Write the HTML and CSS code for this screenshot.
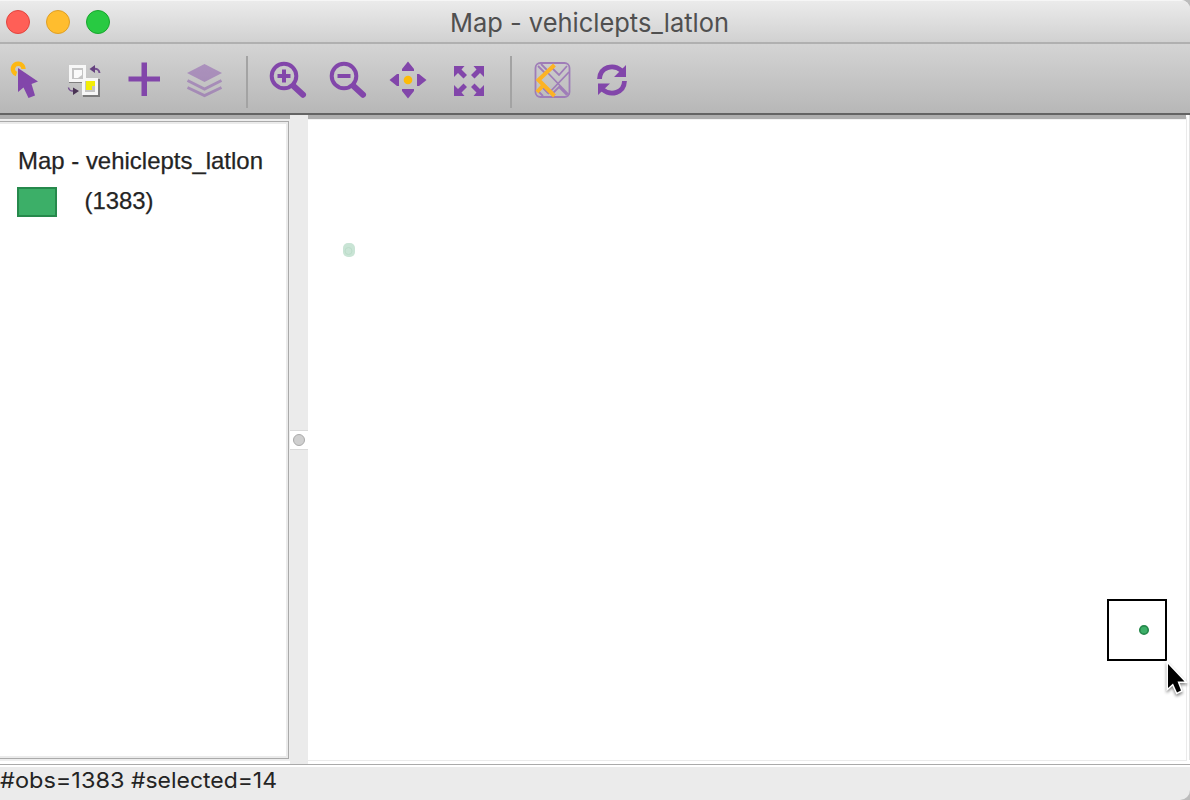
FILE: index.html
```html
<!DOCTYPE html>
<html lang="en">
<head>
<meta charset="utf-8">
<title>Map - vehiclepts_latlon</title>
<link rel="stylesheet" href="styles.css">
</head>
<body>
<div class="window">
  <header class="titlebar">
    <div class="lights"><span class="light close"></span><span class="light minimize"></span><span class="light expand"></span></div>
    <svg class="title" width="290" height="42"><text x="5" y="31.500" textLength="279" lengthAdjust="spacingAndGlyphs">Map - vehiclepts_latlon</text></svg>
  </header>
  <nav class="toolbar">
    <svg class="tool" viewBox="0 55 50 50"><path class="gold-line" stroke-width="4.500" d="M16.500 74A5.300 5.300 0 1 1 23.500 69"/><path class="fill" d="M18 68V92L23.500 87.500L28.500 98L35 95.500L31.500 84L38 81.500Z"/></svg>
    <svg class="tool" viewBox="60 55 50 50"><g transform="translate(1 1)" opacity=".35"><path d="M68 64H85V82H68ZM82 78H99V96H82Z"/></g><path fill="#f7f7f7" d="M69 65H86V82H69ZM82 78H98V95H82Z"/><path fill="#c4c4c4" d="M72 68H83V79H72ZM85 81H95V92H85Z"/><path fill="#fafafa" d="M74 70H82V75L78 78H74Z"/><path fill="#f3ed08" d="M86 81H95V86H92V90H86Z"/><path fill="none" stroke="#75508f" stroke-width="2" d="M93 69Q99 68 99.500 73"/><path fill="#65417f" d="M89.500 69L95 65V73Z"/><path fill="none" stroke="#75508f" stroke-width="1.500" d="M68.500 87.500Q69 91 73 91"/><path fill="#493354" d="M79 91L73 87.500V95Z"/></svg>
    <svg class="tool" viewBox="120 55 50 50"><path class="fill" d="M141.500 62.500H147V76.500H160V81.500H147V96H141.500V81.500H128.500V76.500H141.500Z"/></svg>
    <svg class="tool faded" viewBox="180 55 50 50"><path class="fill" d="M204.500 64L222 73L204.500 82L187 73Z"/><path class="line" stroke-width="3" d="M187.500 80.500L204.500 89L221.500 80.500M187.500 87.500L204.500 95.500L221.500 87.500"/></svg>
    <span class="divider"></span>
    <svg class="tool" viewBox="263 55 50 50"><circle class="line" cx="284" cy="76" r="12.300" stroke-width="4"/><path class="line" stroke-width="4" d="M277.500 76H290.500M284 69.500V82.500"/><path class="line round" stroke-width="6" d="M293.500 86L303 94.800"/></svg>
    <svg class="tool" viewBox="323 55 50 50"><circle class="line" cx="344" cy="76" r="12.300" stroke-width="4"/><path class="line" stroke-width="4" d="M337.500 76H350.500"/><path class="line round" stroke-width="6" d="M353.500 86L363 94.800"/></svg>
    <svg class="tool" viewBox="383 55 50 50"><path class="fill" d="M408 61.500L414 69V71H402V69ZM408 98.500L414 91V89H402V91ZM389.500 80L397 74H399V86H397ZM426.500 80L419 74H417V86H419Z"/><circle cx="408" cy="80" r="4.300" fill="#fdbb08"/></svg>
    <svg class="tool" viewBox="443 55 50 50"><path class="fill" d="M454 66H464.500L461.500 69.500L467 75L463.500 78.500L458 73L454 77ZM484 66H473.500L476.500 69.500L471 75L474.500 78.500L480 73L484 77ZM454 96H464.500L461.500 92.500L467 87L463.500 83.500L458 89L454 85ZM484 96H473.500L476.500 92.500L471 87L474.500 83.500L480 89L484 85Z"/></svg>
    <span class="divider second"></span>
    <svg class="tool" viewBox="527 55 50 50"><g fill="none" stroke="#9f7db8" stroke-width="1.800"><rect x="535.500" y="63" width="34" height="34" rx="5"/><path d="M538 66L545 73M547 72L569 95M569 72L548 94M551 67L559 75L567 66M553 93L559 87L567 95M537 90L543 96M541 64L547 70M541 86L548 93"/></g><path fill="none" stroke="#fdb324" stroke-width="4" d="M554.500 65L538.500 80L554.500 96M537 92L544 84.500"/></svg>
    <svg class="tool" viewBox="587 55 50 50"><path class="line" stroke-width="4.800" d="M599.500 79C600 67 613 63.500 621.500 70.500M624.500 81C624 93 611 96.500 602.500 89.500"/><path class="fill" d="M626 65V77H614ZM598 95V83.500H610Z"/></svg>
  </nav>
  <main class="workspace">
    <aside class="legend">
      <div class="legend-box">
        <svg width="285" height="120"><g class="legend-text"><text x="18" y="47" textLength="245" lengthAdjust="spacingAndGlyphs">Map - vehiclepts_latlon</text><text x="84.500" y="87" textLength="69" lengthAdjust="spacingAndGlyphs">(1383)</text></g><rect x="18" y="66" width="38" height="28" fill="#3caf68" stroke="#26894c" stroke-width="2"/></svg>
      </div>
    </aside>
    <div class="splitter"><span class="grip"><i></i></span></div>
    <section class="map">
      <svg width="882" height="649" viewBox="308 115 882 649">
        <rect x="343" y="243" width="12" height="14" rx="5" fill="#c9e4d5"/><circle cx="348.500" cy="251" r="3.500" fill="none" stroke="#bbdcc9"/>
        <rect x="1108" y="600" width="58" height="60" fill="none" stroke="#000" stroke-width="2"/>
        <circle cx="1144" cy="630" r="4.200" fill="#3caf68" stroke="#26894c" stroke-width="1.700"/>
        <path class="cursor" d="M1168 664V688L1173 683.500L1177 692.500L1181 690.500L1177.500 681.500H1184.500Z"/>
      </svg>
    </section>
  </main>
  <footer class="statusbar"><svg width="300" height="33"><text y="21"><tspan x="0" textLength="124.500" lengthAdjust="spacingAndGlyphs">#obs=1383</tspan> <tspan x="131" textLength="146" lengthAdjust="spacingAndGlyphs">#selected=14</tspan></text></svg></footer>
</div>
</body>
</html>
```
FILE: styles.css
```css
* { box-sizing: border-box; }
body { margin: 0; background: #bcbcbc; }
svg { display: block; }
.window { width: 1190px; height: 800px; overflow: hidden; border-radius: 0 9px 10px 0; background: #ebebeb; display: flex; flex-direction: column; }
.titlebar { height: 44px; display: grid; grid-template-columns: 445px 290px 1fr; border-top: 1px solid #f6f6f6; border-bottom: 2px solid #b0b0b0; background: linear-gradient(#ebebeb, #d1d1d1); }
.lights { display: flex; gap: 16px; padding: 9px 0 0 6px; }
.light { width: 24px; height: 24px; border: 1px solid #e2443e; border-radius: 50%; background: #ff5f57; }
.minimize { background: #ffbd2e; border-color: #df9f25; }
.expand { background: #28ca42; border-color: #18a62d; }
.title { margin-top: -1px; font: 26px Inter, sans-serif; fill: #505050; }
.toolbar { height: 71px; flex: none; display: flex; gap: 10px; padding-top: 11px; background: linear-gradient(#d4d4d4, #b7b7b7); border-bottom: 2px solid #636363; }
.tool { width: 50px; height: 50px; flex: none; }
.fill { fill: #8246aa; }
.line { fill: none; stroke: #8246aa; }
.round { stroke-linecap: round; }
.gold-line { fill: none; stroke: #fdb813; }
.faded { opacity: .43; }
.divider { width: 2px; height: 52px; flex: none; margin: 1px 5px 0 6px; background: #a3a3a3; }
.second { margin-left: 7px; }
.workspace { height: 649px; flex: none; display: grid; grid-template-columns: 290px 18px 882px; }
.legend { border-top: 4px solid #adadad; padding: 2px 1px 2px 0; background: #ededed; border-bottom: 3px solid #fff; }
.legend-box { height: 638px; border: solid #aaa; border-width: 1px 1px 1px 0; background: #fff; box-shadow: inset 0 2px #ebebeb, inset -2px -2px #ebebeb; }
.legend-text { font: 24px "Liberation Sans", Arial, sans-serif; fill: #242424; stroke: #242424; stroke-width: .25px; }
.splitter { margin-top: 1px; display: flex; flex-direction: column; padding-top: 314px; background: #ebebeb; }
.grip { height: 20px; display: grid; place-items: center; background: #fff; border: solid #dadada; border-width: 1px 0; }
.grip i { width: 12px; height: 12px; border: 1px solid #aaa; border-radius: 50%; background: #cfcfcf; }
.map { background: linear-gradient(#adadad 0 4px, #f2f2f2 4px 5px, transparent 5px) 0 0 / 878px 5px no-repeat, linear-gradient(#eaeaea, #eaeaea) 878px 2px / 1px 644px no-repeat, linear-gradient(#eaeaea, #eaeaea) 0 645px / 879px 1px no-repeat, linear-gradient(#e3e3e3, #e3e3e3) 881px 0 / 1px 645px no-repeat, #fff; }
.cursor { fill: #000; stroke: #fff; stroke-width: 3px; paint-order: stroke; filter: drop-shadow(0 2px 1.500px #0007); }
.statusbar { flex: 1; border-top: 1px solid #aaa; box-shadow: inset 0 2px #fff; padding-top: 2px; }
.statusbar svg { font: 22px Inter, sans-serif; fill: #242424; }
```
